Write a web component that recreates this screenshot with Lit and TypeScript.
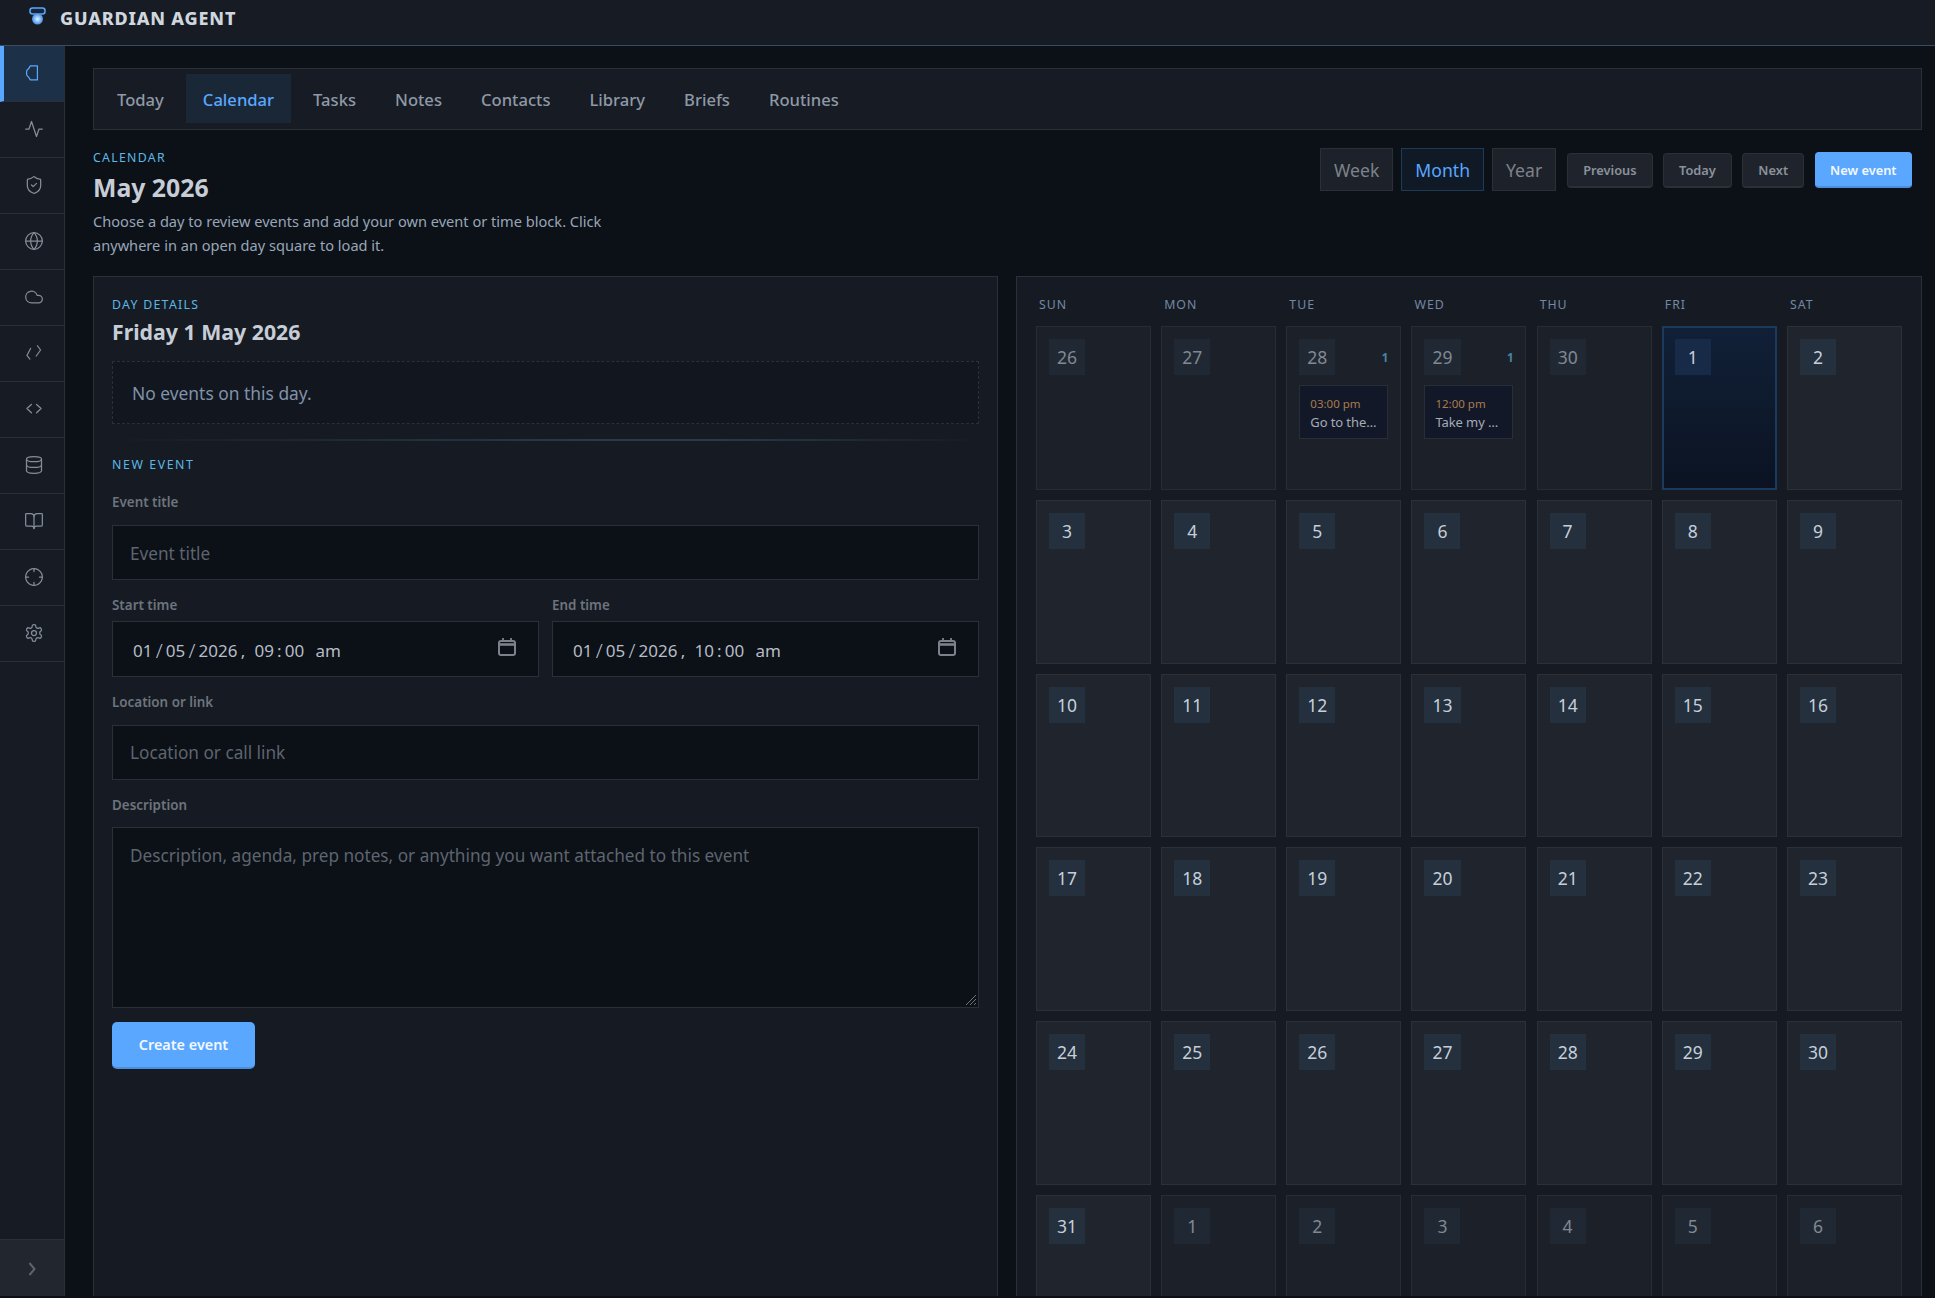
import { LitElement, html, css, svg } from "lit";
import { customElement } from "lit/decorators.js";

const icons = [
  svg`<path d="M18.500 3.500H10L7.800 7Q5.500 8.500 5.500 10.500v3Q5.500 15.500 7.800 16.800L10 20.300H18.500z"/>`,
  svg`<path d="M2 12h4l3-9 6 18 3-9h4"/>`,
  svg`<path d="M20 13c0 5-3.500 7.500-7.660 8.950a1 1 0 0 1-.67-.01C7.500 20.500 4 18 4 13V6a1 1 0 0 1 1-1c2 0 4.500-1.200 6.240-2.720a1.170 1.170 0 0 1 1.520 0C14.510 3.810 17 5 19 5a1 1 0 0 1 1 1z"/><path d="m9 12 2 2 4-4"/>`,
  svg`<circle cx="12" cy="12" r="10"/><path d="M12 2a14.500 14.500 0 0 0 0 20 14.500 14.500 0 0 0 0-20"/><path d="M2 12h20"/>`,
  svg`<path d="M17.500 19H9a7 7 0 1 1 6.710-9h1.790a4.500 4.500 0 1 1 0 9Z"/>`,
  svg`<path d="M7.900 6.500L3.500 14.900 7.100 19.300M16.100 3.300L19.900 8.400 14.700 15.600"/>`,
  svg`<path d="M8.900 6.500L3.500 11.500 8.900 16.500M15.100 6.500L20.500 11.500 15.100 16.500"/>`,
  svg`<ellipse cx="12" cy="5" rx="9" ry="3"/><path d="M3 5V19A9 3 0 0 0 21 19V5"/><path d="M3 12A9 3 0 0 0 21 12"/>`,
  svg`<path d="M12 7v14"/><path d="M3 18a1 1 0 0 1-1-1V4a1 1 0 0 1 1-1h5a4 4 0 0 1 4 4 4 4 0 0 1 4-4h5a1 1 0 0 1 1 1v13a1 1 0 0 1-1 1h-6a3 3 0 0 0-3 3 3 3 0 0 0-3-3z"/>`,
  svg`<circle cx="12" cy="12" r="10" stroke-dasharray="4.400 .84"/><path d="M12 2v3.500M12 18.500V22M2 12h3.500M18.500 12H22"/>`,
  svg`<path d="M12.220 2h-.44a2 2 0 0 0-2 2v.18a2 2 0 0 1-1 1.730l-.43.25a2 2 0 0 1-2 0l-.15-.08a2 2 0 0 0-2.730.73l-.22.38a2 2 0 0 0 .73 2.730l.15.1a2 2 0 0 1 1 1.720v.51a2 2 0 0 1-1 1.740l-.15.09a2 2 0 0 0-.73 2.730l.22.38a2 2 0 0 0 2.730.73l.15-.08a2 2 0 0 1 2 0l.43.25a2 2 0 0 1 1 1.730V20a2 2 0 0 0 2 2h.44a2 2 0 0 0 2-2v-.18a2 2 0 0 1 1-1.730l.43-.25a2 2 0 0 1 2 0l.15.08a2 2 0 0 0 2.730-.73l.22-.39a2 2 0 0 0-.73-2.730l-.15-.08a2 2 0 0 1-1-1.740v-.5a2 2 0 0 1 1-1.740l.15-.09a2 2 0 0 0 .73-2.730l-.22-.38a2 2 0 0 0-2.730-.73l-.15.08a2 2 0 0 1-2 0l-.43-.25a2 2 0 0 1-1-1.730V4a2 2 0 0 0-2-2z"/><circle cx="12" cy="12" r="3"/>`,
];

const tabs = ["Today", "Calendar", "Tasks", "Notes", "Contacts", "Library", "Briefs", "Routines"];

type Day = { n: number; dim?: boolean; sel?: boolean; time?: string; title?: string };

const days: Day[] = [
  { n: 26, dim: true }, { n: 27, dim: true },
  { n: 28, dim: true, time: "03:00 pm", title: "Go to the dentist" },
  { n: 29, dim: true, time: "12:00 pm", title: "Take my Mum to clinic" },
  { n: 30, dim: true }, { n: 1, sel: true },
  ...Array.from({ length: 30 }, (_, i) => ({ n: i + 2 })),
  ...[1, 2, 3, 4, 5, 6].map((n) => ({ n, dim: true })),
];

const dateField = (parts: string[]) => html`
  <div class="input date">
    <span class="dt">
      <span>${parts[0]}</span><span class="s">/</span><span>${parts[1]}</span><span class="s">/</span><span>${parts[2]}</span><span>,</span>
      <span class="hh">${parts[3]}</span><span>:</span><span>${parts[4]}</span><span class="ap">${parts[5]}</span>
    </span>
    <svg class="cal" viewBox="0 0 18 18" width="18" height="18" fill="none" stroke="#7b828c" stroke-width="2">
      <rect x="1" y="3" width="16" height="14" rx="2"/><path d="M1 6.500h16" stroke-width="2.600"/><path d="M5 0v3M13 0v3" stroke-width="1.800"/>
    </svg>
  </div>
`;

@customElement("app-root")
export class AppRoot extends LitElement {
  static styles = css`
    :host { display: block; width: 1935px; height: 1298px; background: #0b0e14; overflow: hidden; font-family: "Noto Sans", sans-serif; color: #cdd3db; }
    * { box-sizing: border-box; }
    .app { height: 1296px; display: flex; flex-direction: column; overflow: hidden; }
    header { height: 46px; flex: none; background: #161b24; border-bottom: 1px solid #3a4c62; display: flex; align-items: flex-start; padding: 7px 0 0 29px; gap: 14px; }
    .brand { font-size: 18px; font-weight: 800; letter-spacing: .8px; color: #cfd6de; line-height: 22px; }
    .body { flex: 1; display: flex; min-height: 0; }
    aside { width: 65px; flex: none; background: #161b24; border-right: 1px solid #2b3038; display: flex; flex-direction: column; }
    .nav { height: 56px; flex: none; display: flex; align-items: center; justify-content: center; border-bottom: 1px solid #2b3038; padding: 0 0 1px 4px; color: #858d98; }
    .nav svg { width: 20px; height: 20px; fill: none; stroke: currentColor; stroke-width: 1.500; stroke-linecap: round; stroke-linejoin: round; }
    .nav.on { background: #1c3047; border-left: 4px solid #5aa7ff; padding: 0 4px 1px 0; color: #5aa7ff; border-bottom-color: #2b3038; }
    .grow { flex: 1; }
    .toggle { height: 57px; flex: none; background: #22262e; border-top: 1px solid #2b3038; display: flex; align-items: center; justify-content: center; padding: 2px 0 0 0; color: #5b6470; }
    main { flex: 1; min-width: 0; padding: 22px 13px 0 28px; display: flex; flex-direction: column; background: #0c1017; }
    .tabs { height: 62px; flex: none; border: 1px solid #2b3038; background: #161b24; display: flex; align-items: flex-start; padding: 5px 6px; gap: 5px; }
    .tab { height: 49px; padding: 2px 17px 0; display: flex; align-items: center; font-size: 16.600px; font-weight: 500; color: #8f99a6; }
    .tab.on { background: #1a2737; color: #5aa7ff; }
    .head { flex: none; height: 146px; padding-top: 19px; display: flex; justify-content: space-between; }
    .eyebrow { font-size: 12.300px; letter-spacing: 1.300px; color: #5cb8e6; line-height: 18px; text-transform: uppercase; }
    h1 { margin: 5px 0 0; font-size: 24.800px; line-height: 31px; font-weight: 700; color: #c6cdd6; }
    .desc { margin: 6px 0 0; width: 530px; font-size: 14.600px; line-height: 24px; color: #98a6b8; }
    .actions { display: flex; align-items: flex-start; padding: 0 10px 0 0; margin-top: -1px; }
    .seg { height: 43px; padding: 0 13px; display: flex; align-items: center; font-size: 17.600px; border: 1px solid #2b3038; background: #1d2129; color: #7d838c; margin-right: 8px; }
    .seg.on { background: #101a26; border-color: #1e3a57; color: #5aa7ff; }
    .btn { height: 35px; margin: 5px 0 0 10.500px; padding: 0 15px; display: flex; align-items: center; font-size: 12.800px; font-weight: 600; border: 1px solid #2b3038; border-bottom-width: 2px; border-radius: 4px; background: #1f242c; color: #8b929c; }
    .seg + .btn { margin-left: 3px; }
    .btn.pri { background: #5aa7ff; border-color: #5aa7ff; border-bottom-color: #4c8fdc; color: #f3f8ff; height: 36px; margin-top: 4px; padding: 0 14.500px; }
    .cols { flex: 1; min-height: 0; display: grid; grid-template-columns: 905px 906px; gap: 18px; }
    .panel { background: #161b23; border: 1px solid #2b3038; border-bottom: none; padding: 19px 18px 0; overflow: hidden; }
    .panel.right { padding-left: 19px; }
    h2 { margin: 3px 0 0; font-size: 21.300px; line-height: 30px; font-weight: 700; color: #c6cdd6; }
    .empty { margin-top: 14px; height: 63px; border: 1px dashed #27313d; background: #12161e; display: flex; align-items: center; padding-left: 19px; font-size: 17.400px; color: #8092aa; }
    .rule { height: 2px; margin: 15px 0 15px; background: linear-gradient(90deg, transparent, #2a3a46 55%, #2a3a46 70%, transparent); }
    .new { letter-spacing: 1.600px; }
    label { display: block; font-size: 13.400px; font-weight: 600; color: #6d747e; line-height: 18px; }
    .l1 { margin-top: 19px; }
    .l2 { margin-top: 15.500px; }
    .l3 { margin-top: 16.500px; }
    .input { margin-top: 14px; height: 55px; border: 1px solid #2b3038; background: #0c1017; display: flex; align-items: center; padding: 1px 17px 0; font-size: 17.200px; color: #5e656f; }
    .row2 { display: grid; grid-template-columns: 427px 427px; gap: 13px; margin-top: 16px; }
    .row2 .input { margin-top: 7px; padding: 0 17px 0 20px; justify-content: space-between; height: 56px; }
    .dt { display: flex; align-items: center; gap: 3.200px; font-size: 17px; color: #b6bdc6; margin-top: 3px; }
    .s { font-size: 20px; line-height: 20px; font-weight: 300; }
    .hh { margin-left: 6px; }
    .ap { margin-left: 8px; }
    .cal { margin: -5px 5px 0 0; }
    .area { align-items: flex-start; height: 181px; margin-top: 13px; padding-top: 16px; position: relative; }
    .grip { position: absolute; right: 1px; bottom: 1px; }
    .create { margin-top: 14px; width: 143px; height: 47px; border-radius: 5px; background: #5aa7ff; border-bottom: 2px solid #4c8fdc; display: flex; align-items: center; justify-content: center; font-size: 14.400px; font-weight: 600; color: #f3f8ff; }
    .week { display: grid; grid-template-columns: repeat(7, 115px); column-gap: 10.170px; height: 30px; }
    .week span { font-size: 12.300px; letter-spacing: 1px; color: #7488a3; line-height: 18px; padding-left: 3px; }
    .grid { display: grid; grid-template-columns: repeat(7, 115px); column-gap: 10.170px; row-gap: 10px; grid-auto-rows: 163.750px; }
    .cell { background: #20252d; border: 1px solid #2c3139; padding: 12px; min-width: 0; }
    .cell.dim { background: #1c2129; border-color: #282d35; }
    .cell.sel { background: linear-gradient(180deg, #112037, #0b1322); border: 2px solid #1b3a5e; padding: 11px; }
    .top { display: flex; justify-content: space-between; align-items: center; }
    .chip { min-width: 36px; height: 36px; padding: 0 8px; display: flex; align-items: center; justify-content: center; font-size: 17.500px; background: #24303d; color: #c6cfd9; }
    .dim .chip { background: #202833; color: #808892; }
    .sel .chip { background: #172a47; }
    .count { font-size: 11.500px; font-weight: 700; color: #4a84a6; }
    .event { margin-top: 10px; height: 54px; border: 1px solid #282d38; background: #131828; padding: 8px 8px 0 10px; overflow: hidden; }
    .time { font-size: 11.500px; line-height: 19px; color: #a87c4f; white-space: nowrap; }
    .title { font-size: 13px; letter-spacing: -.1px; line-height: 19px; color: #a4acb7; white-space: nowrap; overflow: hidden; text-overflow: ellipsis; }
  `;

  render() {
    return html`
      <div class="app">
        <header>
          <svg width="17" height="18" viewBox="0 0 17 18" fill="none">
            <defs>
              <radialGradient id="ball" cx=".5" cy=".5" r=".55">
                <stop offset="0" stop-color="#e6f4ff"/><stop offset=".45" stop-color="#8cc4ff"/><stop offset="1" stop-color="#3d7fd6"/>
              </radialGradient>
            </defs>
            <rect x="1" y="1" width="15" height="6" rx="2.500" fill="#17263a" stroke="#5aa7ff" stroke-width="1.500"/>
            <circle cx="8.500" cy="12" r="5.500" fill="url(#ball)"/>
          </svg>
          <div class="brand">GUARDIAN AGENT</div>
        </header>
        <div class="body">
          <aside>
            ${icons.map((p, i) => html`<div class="nav ${i === 0 ? "on" : ""}"><svg viewBox="0 0 24 24">${p}</svg></div>`)}
            <div class="grow"></div>
            <div class="toggle">
              <svg width="10" height="16" viewBox="0 0 10 16" fill="none" stroke="currentColor" stroke-width="2"><path d="M2.500 2l5 6-5 6"/></svg>
            </div>
          </aside>
          <main>
            <nav class="tabs">
              ${tabs.map((t) => html`<div class="tab ${t === "Calendar" ? "on" : ""}">${t}</div>`)}
            </nav>
            <section class="head">
              <div>
                <div class="eyebrow">Calendar</div>
                <h1>May 2026</h1>
                <p class="desc">Choose a day to review events and add your own event or time block. Click anywhere in an open day square to load it.</p>
              </div>
              <div class="actions">
                <div class="seg">Week</div>
                <div class="seg on">Month</div>
                <div class="seg">Year</div>
                <div class="btn">Previous</div>
                <div class="btn">Today</div>
                <div class="btn">Next</div>
                <div class="btn pri">New event</div>
              </div>
            </section>
            <div class="cols">
              <section class="panel">
                <div class="eyebrow">Day details</div>
                <h2>Friday 1 May 2026</h2>
                <div class="empty">No events on this day.</div>
                <div class="rule"></div>
                <div class="eyebrow new">New event</div>
                <label class="l1">Event title</label>
                <div class="input">Event title</div>
                <div class="row2">
                  <div><label>Start time</label>${dateField(["01", "05", "2026", "09", "00", "am"])}</div>
                  <div><label>End time</label>${dateField(["01", "05", "2026", "10", "00", "am"])}</div>
                </div>
                <label class="l2">Location or link</label>
                <div class="input">Location or call link</div>
                <label class="l3">Description</label>
                <div class="input area">Description, agenda, prep notes, or anything you want attached to this event
                  <svg class="grip" width="14" height="14" viewBox="0 0 14 14" stroke="#6d747e" stroke-width="1"><path d="M13 3L3 13M13 7l-6 6M13 11l-2 2"/></svg>
                </div>
                <div class="create">Create event</div>
              </section>
              <section class="panel right">
                <div class="week">${["Sun", "Mon", "Tue", "Wed", "Thu", "Fri", "Sat"].map((d) => html`<span>${d.toUpperCase()}</span>`)}</div>
                <div class="grid">
                  ${days.map((d) => html`
                    <div class="cell ${d.dim ? "dim" : ""} ${d.sel ? "sel" : ""}">
                      <div class="top"><div class="chip">${d.n}</div>${d.time ? html`<div class="count">1</div>` : ""}</div>
                      ${d.time ? html`<div class="event"><div class="time">${d.time}</div><div class="title">${d.title}</div></div>` : ""}
                    </div>
                  `)}
                </div>
              </section>
            </div>
          </main>
        </div>
      </div>
    `;
  }
}
